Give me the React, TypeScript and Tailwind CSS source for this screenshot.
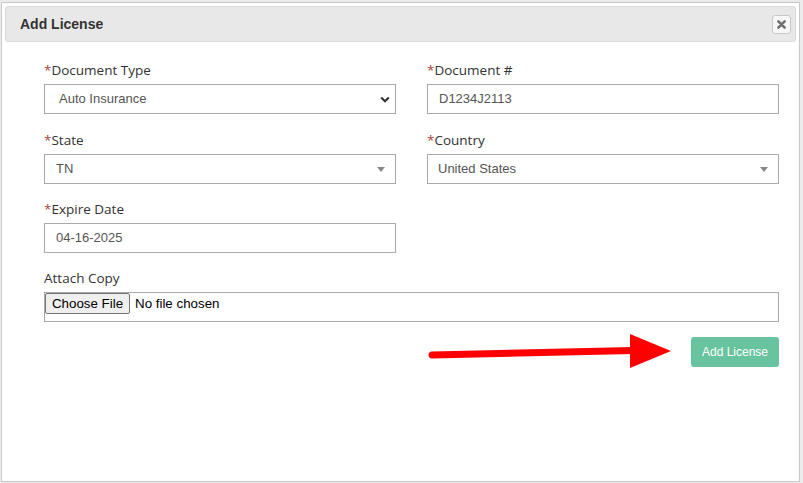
import React from 'react';

const label = "text-[13.5px] leading-[18px] text-[#333] font-['Open_Sans',sans-serif] mb-[5px] pt-px";
const box = "h-[30px] border border-[#aaa] bg-white flex items-center text-[13px] text-[#555] font-['Liberation_Sans',Arial,sans-serif]";

function Req({ children }: { children: React.ReactNode }) {
    return (
        <div className={label}>
            <span className="text-[#a94442]">*</span>
            {children}
        </div>
    );
}

function Caret() {
    return (
        <svg width="8" height="5" viewBox="0 0 8 5" className="ml-auto mr-[10px]">
            <path d="M0 0h8L4 5z" fill="#888" />
        </svg>
    );
}

export default function App() {
    return (
        <div className="w-[803px] h-[483px] bg-[#ececec] pt-[2px] pl-[1px] overflow-hidden font-['Liberation_Sans',Arial,sans-serif]">
            <div className="relative w-[799px] h-[480px] bg-white border border-[#c8c8c8] p-[3px]">
                {/* header */}
                <div className="h-[36px] bg-[#e8e8e8] border border-[#dadada] rounded-[3px] flex items-center pl-[14px] pr-[4px]">
                    <h1 className="text-[14px] font-bold text-[#333]">Add License</h1>
                    <button className="ml-auto w-[19px] h-[19px] border border-[#c8c8c8] bg-[#f7f7f7] rounded-[3px] flex items-center justify-center">
                        <svg width="9" height="9" viewBox="0 0 9 9">
                            <path d="M1.4 1.4l6.2 6.2M7.6 1.4L1.4 7.6" stroke="#707070" strokeWidth="2.6" strokeLinecap="round" />
                        </svg>
                    </button>
                </div>

                {/* body */}
                <div className="pt-[18px] pl-[39px] pr-[17px]">
                    <div className="grid grid-cols-2 gap-x-[31px]">
                        <div className="mb-[16px]">
                            <Req>Document Type</Req>
                            <div className={box + " pl-[14px]"}>
                                <span>Auto Insurance</span>
                                <svg width="10" height="7" viewBox="0 0 10 7" className="ml-auto mr-[5px]">
                                    <path d="M1.2 1.5L5 5.2l3.8-3.7" stroke="#333" strokeWidth="2.2" fill="none" />
                                </svg>
                            </div>
                        </div>
                        <div className="mb-[16px]">
                            <Req>Document #</Req>
                            <div className={box + " pl-[11px]"}>D1234J2113</div>
                        </div>
                        <div className="mb-[15px]">
                            <Req>State</Req>
                            <div className={box + " pl-[11px]"}>
                                <span>TN</span>
                                <Caret />
                            </div>
                        </div>
                        <div className="mb-[15px]">
                            <Req>Country</Req>
                            <div className={box + " pl-[10px]"}>
                                <span>United States</span>
                                <Caret />
                            </div>
                        </div>
                        <div className="mb-[15px]">
                            <Req>Expire Date</Req>
                            <div className={box + " pl-[11px]"}>04-16-2025</div>
                        </div>
                        <div />
                    </div>

                    <div className={label}>Attach Copy</div>
                    <div className="h-[30px] border border-[#aaa] flex items-start text-[13.33px] font-['Liberation_Sans',Arial,sans-serif] text-black">
                        <span className="h-[21px] w-[85px] flex items-center justify-center bg-[#efefef] border border-[#767676] rounded-[2px]">
                            Choose File
                        </span>
                        <span className="ml-[5px] leading-[21px]">No file chosen</span>
                    </div>

                    <div className="flex justify-end mt-[15px]">
                        <button className="w-[88px] h-[30px] bg-[#68c39f] rounded-[3px] text-white text-[12px] font-['Liberation_Sans',Arial,sans-serif]">
                            Add License
                        </button>
                    </div>
                </div>

                {/* annotation arrow */}
                <svg className="absolute left-0 top-0 pointer-events-none" width="799" height="480" viewBox="1 3 799 480">
                    <path d="M431 355L632 350.5" stroke="#ff0000" strokeWidth="7" strokeLinecap="round" />
                    <path d="M629 334L670 351L629 368z" fill="#ff0000" />
                </svg>
            </div>
        </div>
    );
}
